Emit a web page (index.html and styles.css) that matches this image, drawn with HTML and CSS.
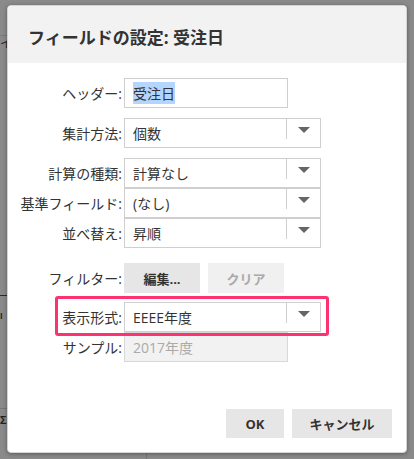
FILE: index.html
```html
<!DOCTYPE html>
<html lang="ja">
<head>
    <meta charset="UTF-8">
    <meta name="viewport" content="width=device-width, initial-scale=1.0">
    <title>フィールドの設定</title>
    <link rel="stylesheet" href="styles.css">
</head>
<body>

    <div class="backdrop">
        <span class="bg-line bg-line-1"></span>
        <span class="bg-char bg-char-1">イ</span>
        <span class="bg-line bg-line-2"></span>
        <span class="bg-char bg-char-2">I</span>
        <span class="bg-line bg-line-3"></span>
        <span class="bg-char bg-char-3">Σ</span>
        <span class="bg-vline"></span>
    </div>

    <div class="dialog">
        <div class="dialog-header">
            <h1>フィールドの設定: 受注日</h1>
        </div>

        <div class="dialog-body">
            <div class="row row-gap">
                <label class="label">ヘッダー:</label>
                <div class="field field-text"><span class="selected">受注日</span></div>
            </div>

            <div class="row row-gap">
                <label class="label">集計方法:</label>
                <div class="field field-select">
                    <span class="value">個数</span>
                    <span class="arrow"></span>
                </div>
            </div>

            <div class="row">
                <label class="label">計算の種類:</label>
                <div class="field field-select">
                    <span class="value">計算なし</span>
                    <span class="arrow"></span>
                </div>
            </div>

            <div class="row">
                <label class="label">基準フィールド:</label>
                <div class="field field-select">
                    <span class="value">(なし)</span>
                    <span class="arrow"></span>
                </div>
            </div>

            <div class="row row-gap-lg">
                <label class="label">並べ替え:</label>
                <div class="field field-select">
                    <span class="value">昇順</span>
                    <span class="arrow"></span>
                </div>
            </div>

            <div class="row row-gap-md">
                <label class="label">フィルター:</label>
                <div class="btn-group">
                    <button class="btn">編集...</button>
                    <button class="btn btn-disabled">クリア</button>
                </div>
            </div>

            <div class="row highlight-row">
                <label class="label">表示形式:</label>
                <div class="field field-select">
                    <span class="value">EEEE年度</span>
                    <span class="arrow"></span>
                </div>
                <span class="highlight"></span>
            </div>

            <div class="row">
                <label class="label">サンプル:</label>
                <div class="field field-text field-readonly">2017年度</div>
            </div>
        </div>

        <div class="dialog-footer">
            <button class="btn btn-ok">OK</button>
            <button class="btn btn-cancel">キャンセル</button>
        </div>
    </div>

</body>
</html>
```

FILE: styles.css
```css
body {
    font-family: "Open Sans", "Noto Sans CJK JP", sans-serif;
    margin: 0;
    padding: 5px 7px 0;
    background-color: #8a8a8a;
    color: #333;
    height: 459px;
    box-sizing: border-box;
    overflow: hidden;
    position: relative;
}

.backdrop {
    position: absolute;
    inset: 0;
}

.bg-line {
    position: absolute;
    left: 0;
    width: 8px;
    height: 1px;
}

.bg-line-1 { top: 35px; background: #7a7a7a; }
.bg-line-2 { top: 295px; background: #2a2a2a; }
.bg-line-3 { top: 408px; background: #777; }

.bg-char {
    position: absolute;
    left: 0;
    font-size: 12px;
    font-weight: bold;
    color: #222;
    line-height: 1;
}

.bg-char-1 { top: 38px; font-weight: normal; }
.bg-char-2 { top: 312px; font-size: 8px; }
.bg-char-3 { top: 414px; font-size: 11px; }

.bg-vline {
    position: absolute;
    left: 146px;
    top: 452px;
    width: 1px;
    height: 7px;
    background: #777;
}

.dialog {
    position: relative;
    width: 400px;
    height: 448px;
    background: #fff;
    border: 1px solid #d4d4d4;
    border-radius: 4px;
    box-sizing: border-box;
    box-shadow: 0 1px 4px rgba(0, 0, 0, 0.35);
    display: flex;
    flex-direction: column;
    overflow: hidden;
}

.dialog-header {
    height: 57px;
    background: #f2f2f2;
    padding-left: 20px;
    display: flex;
    align-items: center;
}

.dialog-header h1 {
    margin: 0;
    font-size: 17px;
    font-weight: bold;
    color: #333;
    padding-top: 4px;
}

.dialog-body {
    padding-top: 15px;
}

.row {
    display: flex;
    align-items: center;
    height: 30px;
}

.row-gap { margin-bottom: 10px; }
.row-gap-lg { margin-bottom: 15px; }
.row-gap-md { margin-bottom: 9px; }

.label {
    width: 114px;
    padding-right: 2px;
    text-align: right;
    font-size: 14px;
    color: #333;
    white-space: nowrap;
}

.field {
    height: 30px;
    box-sizing: border-box;
    border: 1px solid #cfcfcf;
    font-size: 14px;
    color: #333;
    display: flex;
    align-items: center;
    padding-left: 8px;
}

.field-text {
    width: 164px;
}

.selected {
    background: #b4d5fe;
    padding: 1px 0;
}

.field-readonly {
    background: #f2f2f2;
    color: #aaa;
    border-color: #d8d8d8;
}

.field-select {
    width: 197px;
    position: relative;
}

.field-select .value {
    flex: 1;
}

.field-select .arrow {
    width: 33px;
    height: 20px;
    align-self: flex-start;
    border-left: 1px solid #cfcfcf;
    display: flex;
    align-items: center;
    justify-content: center;
}

.field-select .arrow::after {
    content: "";
    border-left: 6px solid transparent;
    border-right: 6px solid transparent;
    border-top: 6px solid #666;
    margin-top: 2px;
}

.btn-group {
    display: flex;
    gap: 8px;
}

.btn {
    height: 30px;
    width: 76px;
    border: none;
    background: #e6e6e6;
    color: #333;
    font-family: inherit;
    font-size: 13px;
    font-weight: bold;
    cursor: pointer;
    padding: 0;
}

.btn:hover {
    background: #dcdcdc;
}

.btn-disabled {
    background: #f0f0f0;
    color: #aaa;
}

.highlight-row {
    position: relative;
}

.highlight {
    position: absolute;
    left: 47px;
    top: -6px;
    width: 274px;
    height: 40px;
    border: 3px solid #fb3370;
    border-radius: 3px;
    box-sizing: border-box;
    pointer-events: none;
}

.dialog-footer {
    margin-top: auto;
    display: flex;
    justify-content: flex-end;
    gap: 8px;
    padding: 0 14px 14px 0;
}

.btn-ok {
    width: 58px;
    height: 29px;
}

.btn-cancel {
    width: 100px;
    height: 29px;
}
```
